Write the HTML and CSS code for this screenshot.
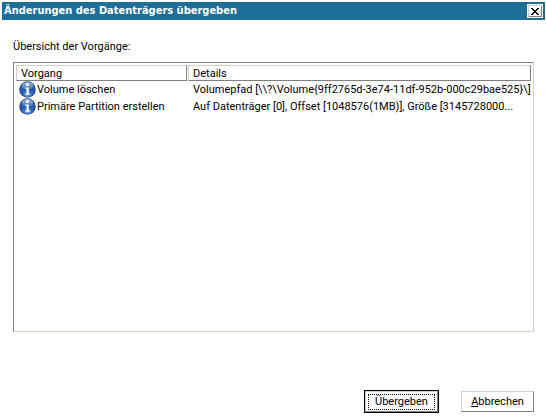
FILE: index.html
```html
<!DOCTYPE html>
<html lang="de">
<head>
    <meta charset="UTF-8">
    <meta name="viewport" content="width=device-width, initial-scale=1.0">
    <title>Änderungen des Datenträgers übergeben</title>
    <link rel="stylesheet" href="styles.css">
</head>
<body>
    <!-- Shared info icon -->
    <svg class="defs" width="0" height="0" aria-hidden="true">
        <defs>
            <radialGradient id="ball" cx="50%" cy="90%" r="85%">
                <stop offset="0" stop-color="#5f9fe6"/>
                <stop offset="0.5" stop-color="#285cae"/>
                <stop offset="1" stop-color="#2b5596"/>
            </radialGradient>
            <linearGradient id="shine" x1="0" y1="0" x2="0" y2="1">
                <stop offset="0" stop-color="#c4d8ee"/>
                <stop offset="1" stop-color="#4c7dbb"/>
            </linearGradient>
            <symbol id="info" viewBox="0 0 16 16">
                <circle cx="8" cy="8" r="7.8" fill="#24457f"/>
                <circle cx="8" cy="8" r="7" fill="url(#ball)"/>
                <ellipse cx="8" cy="4.5" rx="5.5" ry="3.5" fill="url(#shine)" opacity="0.75"/>
                <circle cx="8" cy="3.6" r="1.4" fill="#fff"/>
                <path d="M6 6.2h3.2v5.6h1.1V13H5.9v-1.2h1.2V7.4H6z" fill="#fff"/>
            </symbol>
        </defs>
    </svg>

    <div class="dialog">
        <div class="titlebar">
            <h1>Änderungen des Datenträgers übergeben</h1>
            <button class="close" type="button" aria-label="Schließen">
                <svg width="8" height="7" viewBox="0 0 8 7" shape-rendering="crispEdges">
                    <path d="M0 0h2v1H0zM6 0h2v1H6zM1 1h2v1H1zM5 1h2v1H5zM2 2h4v1H2zM3 3h2v1H3zM2 4h4v1H2zM1 5h2v1H1zM5 5h2v1H5zM0 6h2v1H0zM6 6h2v1H6z"/>
                </svg>
            </button>
        </div>

        <div class="content">
            <p id="list-label">Übersicht der Vorgänge:</p>

            <div class="list">
                <table aria-labelledby="list-label">
                    <thead>
                        <tr>
                            <th class="operation"><div>Vorgang</div></th>
                            <th><div>Details</div></th>
                        </tr>
                    </thead>
                    <tbody>
                        <tr>
                            <td><div class="item"><svg class="icon"><use href="#info"/></svg>Volume löschen</div></td>
                            <td class="details">Volumepfad [\\?\Volume{9ff2765d-3e74-11df-952b-000c29bae525}\]</td>
                        </tr>
                        <tr>
                            <td><div class="item"><svg class="icon"><use href="#info"/></svg>Primäre Partition erstellen</div></td>
                            <td class="details">Auf Datenträger [0], Offset [1048576(1MB)], Größe [3145728000...</td>
                        </tr>
                    </tbody>
                </table>
            </div>

            <div class="buttons">
                <button class="btn default" type="submit"><span>Über<u>g</u>eben</span></button>
                <button class="btn" type="button"><span><u>A</u>bbrechen</span></button>
            </div>
        </div>
    </div>
</body>
</html>
```

FILE: styles.css
```css
* {
    margin: 0;
    padding: 0;
    box-sizing: border-box;
}

body {
    font-family: Tahoma, Roboto, sans-serif;
    font-size: 11px;
    line-height: 16px;
    color: #000;
    background-color: #fff;
}

.defs {
    position: absolute;
}

.dialog {
    display: flex;
    flex-direction: column;
    min-height: 100vh;
    padding: 2px 1px 5px 2px;
}

.titlebar {
    display: flex;
    align-items: center;
    justify-content: space-between;
    height: 18px;
    padding: 0 2px;
    color: #fff;
    background-color: #1d6f98;
}

.titlebar h1 {
    font-family: Tahoma, "DejaVu Sans Condensed", "DejaVu Sans", sans-serif;
    font-size: 11px;
    white-space: nowrap;
}

.close {
    display: flex;
    align-items: center;
    justify-content: center;
    width: 16px;
    height: 14px;
    background-color: #fff;
    border: 1px solid #f4f4f0;
    box-shadow: inset 1px 1px #d4d0c8, inset -1px -1px #808080;
}

.content {
    display: flex;
    flex: 1;
    flex-direction: column;
    padding: 19px 11px 0 11px;
}

.list {
    flex: 1;
    margin-top: 7px;
    padding: 2px 1px 2px 2px;
    border: 1px solid;
    border-color: #808080 #d4d0c8 #d4d0c8 #808080;
}

table {
    width: 100%;
    table-layout: fixed;
    border-collapse: collapse;
}

th {
    font-weight: normal;
    text-align: left;
}

th.operation {
    width: 172px;
}

th div {
    height: 16px;
    margin-right: 1px;
    padding-left: 4px;
    border: 1px solid;
    border-color: #d4d0c8 #808080 #808080 #d4d0c8;
}

td {
    height: 17px;
    white-space: nowrap;
}

.item {
    display: flex;
    align-items: center;
    padding-left: 3px;
}

.icon {
    width: 17px;
    height: 17px;
    margin-right: 1px;
}

.details {
    padding-left: 5px;
    overflow: hidden;
    text-overflow: ellipsis;
}

.buttons {
    display: flex;
    align-items: center;
    justify-content: flex-end;
    gap: 23px;
    margin-top: 58px;
}

.btn {
    width: 73px;
    height: 21px;
    padding: 2px;
    font: inherit;
    line-height: 14px;
    color: #000;
    background-color: #fff;
    border: 1px solid;
    border-color: #d4d0c8 #808080 #808080 #d4d0c8;
}

.btn span {
    display: block;
}

.btn u {
    text-underline-offset: 1px;
}

.btn.default {
    margin: 1px 0;
    padding: 1px 2px;
    outline: 1px solid #000;
}

.btn.default span {
    border: 1px dotted #000;
}
```
